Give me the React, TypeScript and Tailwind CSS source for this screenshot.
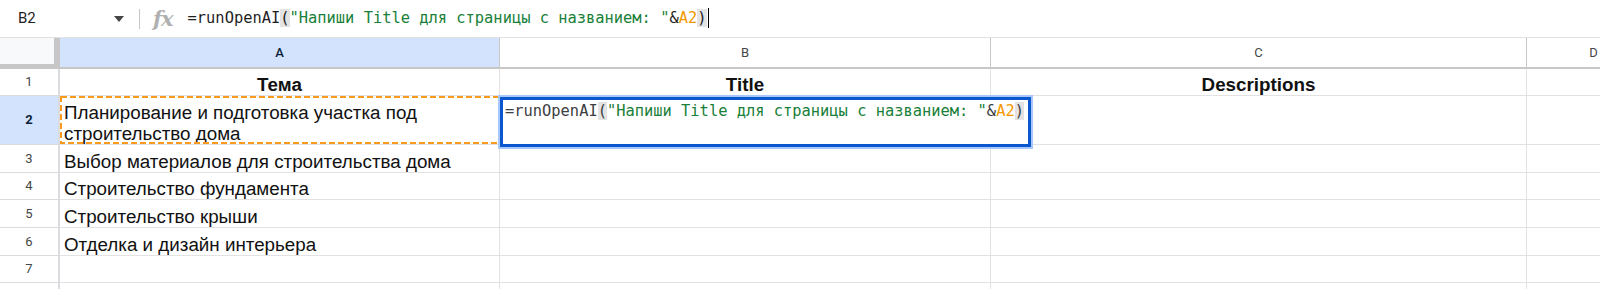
import React from "react";

const COLS = [
  { key: "A", w: "w-[440px]" },
  { key: "B", w: "w-[491px]" },
  { key: "C", w: "w-[536px]" },
  { key: "D", w: "w-[134px]" },
];

const ROWS: { n: number; h: string; a: string; bold?: boolean }[] = [
  { n: 1, h: "h-[27px]", a: "", bold: true },
  { n: 2, h: "h-[49px]", a: "" },
  { n: 3, h: "h-[28px]", a: "Выбор материалов для строительства дома" },
  { n: 4, h: "h-[27px]", a: "Строительство фундамента" },
  { n: 5, h: "h-[28px]", a: "Строительство крыши" },
  { n: 6, h: "h-[28px]", a: "Отделка и дизайн интерьера" },
  { n: 7, h: "h-[27px]", a: "" },
  { n: 8, h: "h-[28px]", a: "" },
];

function Formula({ base }: { base: string }) {
  return (
    <span className="whitespace-pre font-['DejaVu_Sans_Mono','Liberation_Mono',monospace] text-[15.4px]">
      <span className={base}>=runOpenAI</span>
      <span className={`${base} bg-[#e3e3e3]`}>(</span>
      <span className="text-[#188038]">"Напиши Title для страницы с названием: "</span>
      <span className={base}>&amp;</span>
      <span className="text-[#f29900]">A2</span>
      <span className={`${base} bg-[#e3e3e3]`}>)</span>
    </span>
  );
}

function FormulaBar() {
  return (
    <div className="flex h-[38px] items-center border-b border-[#e1e1e1] bg-white">
      <div className="w-[96px] pl-[18px] font-['Roboto',sans-serif] text-[15px] text-[#1f1f1f]">B2</div>
      <svg width="10" height="6" viewBox="0 0 10 6" className="ml-[18px]">
        <path d="M0 0h10L5 6z" fill="#444746" />
      </svg>
      <div className="ml-[15px] h-[20px] w-px bg-[#c4c7c5]" />
      <span className="ml-[13px] font-['DejaVu_Serif',serif] text-[21px] font-semibold italic leading-none tracking-[-1px] text-[#b0b0b0]">
        fx
      </span>
      <div className="ml-[15px] flex items-center">
        <Formula base="text-[#1f1f1f]" />
        <span className="ml-[1px] h-[20px] w-[1.5px] bg-black" />
      </div>
    </div>
  );
}

function ColumnHeaders() {
  return (
    <div className="flex h-[31px] font-['Roboto',sans-serif] text-[13px]">
      <div className="w-[60px] shrink-0 border-r-[6px] border-b-[5px] border-[#c7c7c7] bg-[#f8f9fa]" />
      {COLS.map((c) => (
        <div
          key={c.key}
          className={`${c.w} flex shrink-0 items-center justify-center border-r border-b-2 border-[#c7c7c7] ${
            c.key === "A" ? "bg-[#d3e3fd] font-medium text-[#0b1f3a]" : "bg-white text-[#444746]"
          }`}
        >
          {c.key}
        </div>
      ))}
    </div>
  );
}

function Row({ r }: { r: (typeof ROWS)[number] }) {
  const sel = r.n === 2;
  return (
    <div className={`flex ${r.h}`}>
      <div
        className={`flex w-[60px] shrink-0 items-center justify-center border-r-2 border-b border-[#dadce0] font-['Roboto',sans-serif] text-[13px] ${
          sel ? "bg-[#d3e3fd] font-bold text-[#0b1f3a]" : "bg-white text-[#444746]"
        }`}
      >
        {r.n < 8 ? r.n : null}
      </div>

      {/* column A */}
      <div className="relative flex w-[440px] shrink-0 items-end border-r border-b border-[#e2e2e2] px-[4px] leading-[21px]">
        {r.bold ? (
          <span className="w-full text-center font-bold">Тема</span>
        ) : sel ? (
          <>
            <span>
              Планирование и подготовка участка под
              <br />
              строительство дома
            </span>
            <svg width="441" height="49" className="absolute left-0 top-0">
              <rect x="1" y="1" width="438" height="46" fill="none" stroke="#fb9a1e" strokeWidth="2" strokeDasharray="6 3" />
            </svg>
          </>
        ) : (
          <span>{r.a}</span>
        )}
      </div>

      {/* column B */}
      <div className="relative flex w-[491px] shrink-0 items-end border-r border-b border-[#e2e2e2] px-[4px] leading-[21px]">
        {r.bold ? <span className="w-full text-center font-bold">Title</span> : null}
        {sel ? (
          <div className="absolute left-0 top-[1px] z-10 h-[50px] w-[531px] border-[3px] border-[#0b57d0] bg-white pl-[2px] pt-[1px] leading-[17px] ring-2 ring-[#a8c7fa]">
            <Formula base="text-[#3c4043]" />
          </div>
        ) : null}
      </div>

      {/* column C */}
      <div className="flex w-[536px] shrink-0 items-end border-r border-b border-[#e2e2e2] px-[4px] leading-[21px]">
        {r.bold ? <span className="w-full text-center font-bold">Descriptions</span> : null}
      </div>

      {/* column D */}
      <div className="w-[134px] shrink-0 border-r border-b border-[#e2e2e2]" />
    </div>
  );
}

export default function App() {
  return (
    <div className="h-[289px] w-[1600px] overflow-hidden bg-white font-['Liberation_Sans',Arial,sans-serif] text-[18.8px] text-[#111]">
      <FormulaBar />
      <ColumnHeaders />
      {ROWS.map((r) => (
        <Row key={r.n} r={r} />
      ))}
    </div>
  );
}
